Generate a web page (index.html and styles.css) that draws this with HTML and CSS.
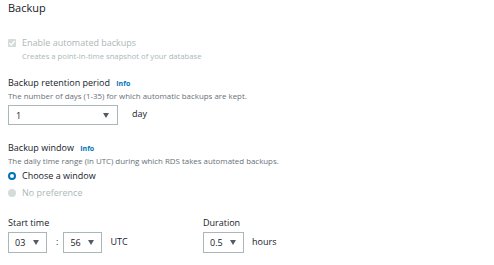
FILE: index.html
```html
<!DOCTYPE html>
<html lang="en">
<head>
  <meta charset="UTF-8"/>
  <title>Backup</title>
  <link rel="stylesheet" href="styles.css">
</head>
<body>
  <section class="panel">
    <h2 class="panel-title">Backup</h2>

    <!-- Enable backups -->
    <div class="check-row disabled">
      <span class="checkbox">
        <svg width="8" height="8" viewBox="0 0 8 8"><path d="M1.5 4.2 L3.3 6 L6.6 2" fill="none" stroke="#fff" stroke-width="1.4"/></svg>
      </span>
      <div>
        <div class="check-label">Enable automated backups</div>
        <div class="check-desc">Creates a point-in-time snapshot of your database</div>
      </div>
    </div>

    <!-- Retention -->
    <div class="field retention">
      <div class="label">Backup retention period <a class="info">Info</a></div>
      <div class="desc">The number of days (1-35) for which automatic backups are kept.</div>
      <div class="inline">
        <div class="select wide"><span>1</span><span class="caret"></span></div>
        <span class="unit">day</span>
      </div>
    </div>

    <!-- Window -->
    <div class="field window">
      <div class="label">Backup window <a class="info">Info</a></div>
      <div class="desc">The daily time range (in UTC) during which RDS takes automated backups.</div>
      <div class="radio-row"><span class="radio on"></span>Choose a window</div>
      <div class="radio-row disabled"><span class="radio off"></span>No preference</div>
    </div>

    <div class="time-grid">
      <div>
        <div class="label">Start time</div>
        <div class="inline">
          <div class="select small"><span>03</span><span class="caret"></span></div>
          <span class="colon">:</span>
          <div class="select small"><span>56</span><span class="caret"></span></div>
          <span class="unit">UTC</span>
        </div>
      </div>
      <div>
        <div class="label">Duration</div>
        <div class="inline">
          <div class="select small duration"><span>0.5</span><span class="caret"></span></div>
          <span class="unit">hours</span>
        </div>
      </div>
    </div>
  </section>
</body>
</html>
```

FILE: styles.css
```css
:root {
  --text: #16191f;
  --muted: #687078;
  --disabled: #aab7b8;
  --blue: #0073bb;
  --border: #aab7b8;
}

* {
  margin: 0;
  padding: 0;
  box-sizing: border-box;
}

body {
  font-family: "Open Sans", "Noto Sans", sans-serif;
  color: var(--text);
  background: #fff;
}

.panel {
  padding: 0 8px;
}

.panel-title {
  font-size: 11px;
  font-weight: 400;
  line-height: 16px;
}

/*—— CHECKBOX ——*/
.check-row {
  display: flex;
  gap: 6px;
  margin-top: 19px;
}
.checkbox {
  width: 8px;
  height: 8px;
  margin-top: 4px;
  border-radius: 1px;
  background: #d5dbdb;
  display: flex;
  align-items: center;
  justify-content: center;
}
.check-label {
  font-size: 9px;
  line-height: 16px;
  color: var(--disabled);
}
.check-desc {
  font-size: 7.7px;
  line-height: 10px;
  color: var(--disabled);
}

/*—— FIELDS ——*/
.label {
  font-size: 9px;
  line-height: 13px;
}
.info {
  color: var(--blue);
  font-weight: 700;
  font-size: 7px;
  margin-left: 4px;
}
.desc {
  font-size: 7.9px;
  line-height: 12px;
  color: var(--muted);
}
.retention {
  margin-top: 15px;
}
.window {
  margin-top: 16px;
}

.inline {
  display: flex;
  align-items: center;
}
.select {
  height: 20px;
  border: 1px solid var(--border);
  display: flex;
  align-items: center;
  justify-content: space-between;
  font-size: 9px;
  padding: 0 8px 0 7px;
}
.select.wide {
  width: 110px;
  margin-top: 3px;
}
.select.small {
  width: 39px;
  padding: 0 7px 0 6px;
  height: 21px;
  margin-top: 3px;
}
.select.duration {
  width: 41px;
}
.caret {
  width: 0;
  height: 0;
  border-left: 3.5px solid transparent;
  border-right: 3.5px solid transparent;
  border-top: 5px solid #545b64;
}
.unit {
  font-size: 9px;
  margin-left: 14px;
}
.colon {
  font-size: 9px;
  margin: 0 5px 0 9px;
}
.time-grid .unit {
  margin-left: 8px;
}

/*—— RADIOS ——*/
.radio-row {
  display: flex;
  align-items: center;
  gap: 6px;
  font-size: 9px;
  line-height: 17px;
}
.radio-row.disabled {
  color: var(--disabled);
}
.radio {
  width: 8px;
  height: 8px;
  border-radius: 50%;
}
.radio.on {
  border: 2.5px solid var(--blue);
  background: #fff;
}
.radio.off {
  background: #d5dbdb;
}

/*—— TIME ——*/
.time-grid {
  display: grid;
  grid-template-columns: 195px 1fr;
  margin-top: 15px;
}
```
